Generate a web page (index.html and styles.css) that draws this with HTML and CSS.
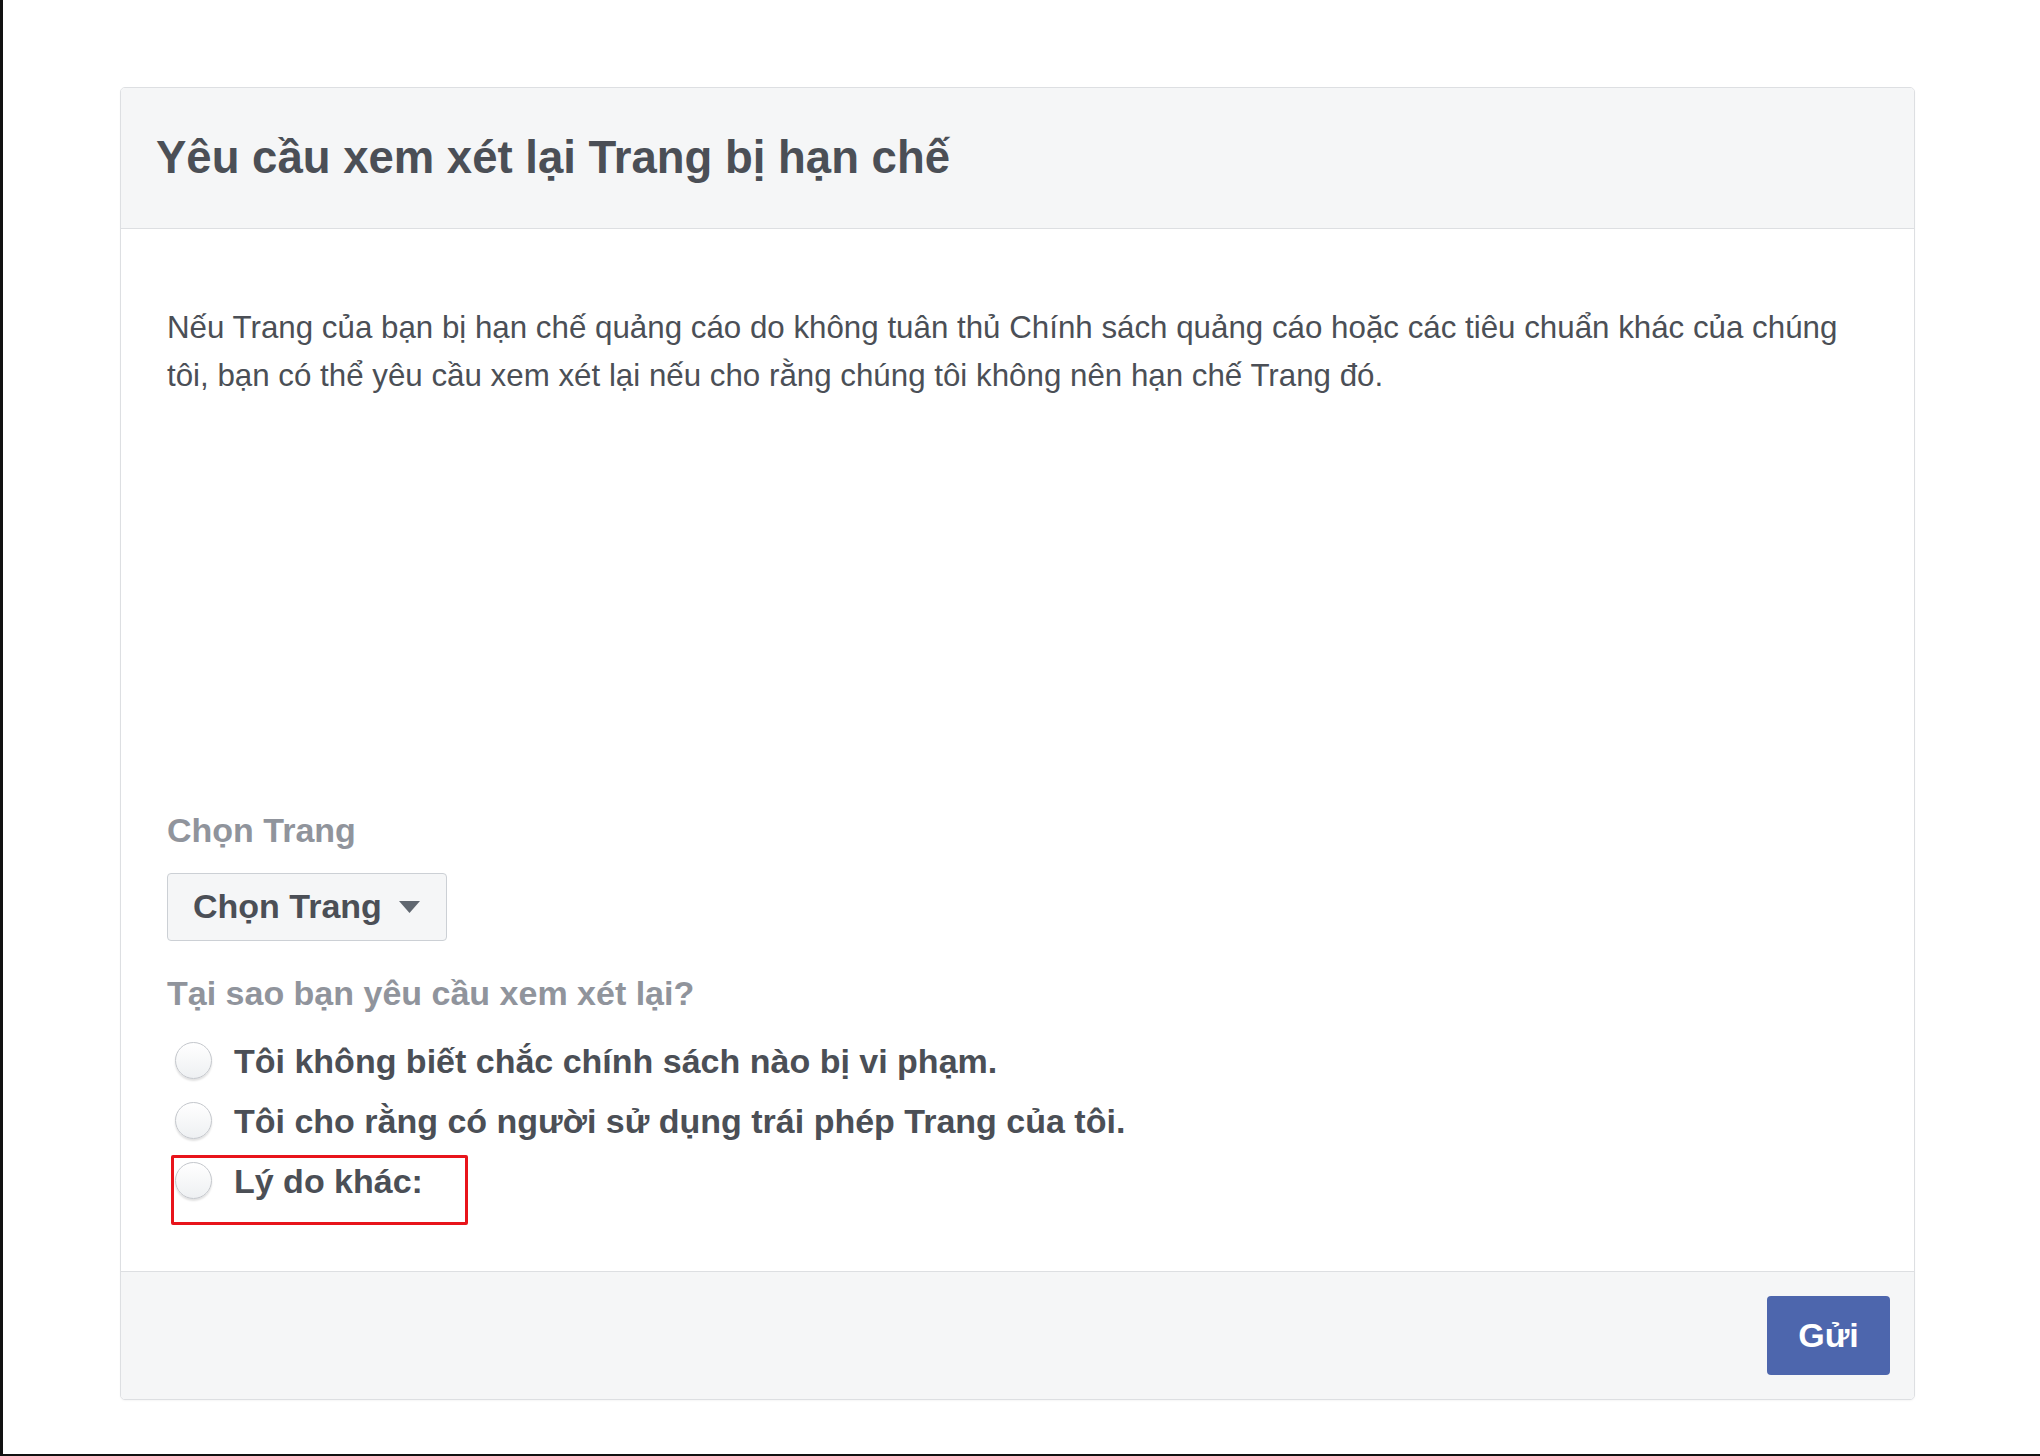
FILE: index.html
```html
<!DOCTYPE html>
<html lang="vi">
<head>
<meta charset="utf-8">
<title>Yêu cầu xem xét lại Trang bị hạn chế</title>
<link rel="stylesheet" href="styles.css">
</head>
<body>
<div class="frame">
  <div class="card">
    <div class="card-header">
      <h1 class="title">Yêu cầu xem xét lại Trang bị hạn chế</h1>
    </div>
    <div class="card-body">
      <p class="intro">Nếu Trang của bạn bị hạn chế quảng cáo do không tuân thủ Chính sách quảng cáo hoặc các tiêu chuẩn khác của chúng tôi, bạn có thể yêu cầu xem xét lại nếu cho rằng chúng tôi không nên hạn chế Trang đó.</p>
      <div class="spacer"></div>
      <div class="field-label">Chọn Trang</div>
      <button class="select" type="button">
        <span class="select-text">Chọn Trang</span>
        <svg class="caret" width="21" height="12" viewBox="0 0 21 12"><path d="M0 0 H21 L10.5 12 Z" fill="#606770"/></svg>
      </button>
      <div class="field-label question">Tại sao bạn yêu cầu xem xét lại?</div>
      <div class="options">
        <label class="option"><span class="radio"></span><span class="option-text">Tôi không biết chắc chính sách nào bị vi phạm.</span></label>
        <label class="option"><span class="radio"></span><span class="option-text">Tôi cho rằng có người sử dụng trái phép Trang của tôi.</span></label>
        <label class="option highlighted"><span class="radio"></span><span class="option-text">Lý do khác:</span><span class="highlight-box"></span></label>
      </div>
    </div>
    <div class="card-footer">
      <button class="submit" type="button">Gửi</button>
    </div>
  </div>
</div>
</body>
</html>
```

FILE: styles.css
```css
html, body {
  margin: 0;
  padding: 0;
  background: #ffffff;
}

.frame {
  box-sizing: border-box;
  width: 2040px;
  height: 1456px;
  border-left: 3px solid #111111;
  border-bottom: 2px solid #111111;
  padding: 87px 0 0 117px;
  font-family: "Liberation Sans", Arial, Helvetica, sans-serif;
  color: #4b4f56;
}

.card {
  width: 1795px;
  box-sizing: border-box;
  border: 1px solid #dddfe2;
  border-radius: 5px;
  background: #ffffff;
  overflow: hidden;
  box-shadow: 0 1px 2px rgba(0, 0, 0, 0.04);
}

.card-header {
  background: #f5f6f7;
  border-bottom: 1px solid #dddfe2;
  padding: 44px 35px;
}

.title {
  margin: 0;
  font-size: 45.5px;
  line-height: 52px;
  font-weight: bold;
  color: #4b4f56;
}

.card-body {
  padding: 75px 46px 61px 46px;
}

.intro {
  margin: 0;
  font-size: 31.3px;
  line-height: 48px;
  color: #4b4f56;
}

.spacer {
  height: 410px;
}

.field-label {
  font-size: 34px;
  line-height: 40px;
  font-weight: bold;
  color: #90949c;
}

.select {
  margin-top: 23px;
  box-sizing: border-box;
  width: 280px;
  height: 68px;
  display: flex;
  align-items: center;
  gap: 17px;
  padding: 0 0 0 25px;
  border: 1px solid #ccd0d5;
  border-radius: 4px;
  background: #f5f6f7;
  font-family: inherit;
  font-size: 34px;
  font-weight: bold;
  color: #4b4f56;
  cursor: pointer;
}

.select-text {
  line-height: 40px;
  margin-top: -3px;
}

.caret {
  display: block;
  margin-top: 0;
}

.question {
  margin-top: 32px;
}

.options {
  margin-top: 17px;
  display: flex;
  flex-direction: column;
}

.option {
  position: relative;
  display: flex;
  align-items: center;
  height: 60px;
  gap: 22px;
  padding-left: 8px;
  font-size: 34px;
  font-weight: bold;
  color: #4b4f56;
}

.radio {
  box-sizing: border-box;
  width: 37px;
  height: 37px;
  flex: none;
  border-radius: 50%;
  border: 1px solid #c4c7cc;
  background: linear-gradient(#ffffff, #eef0f2);
  box-shadow: 0 2px 2px rgba(0, 0, 0, 0.12);
}

.option-text {
  line-height: 40px;
  padding-top: 1px;
}

.highlight-box {
  position: absolute;
  left: 4px;
  top: 5px;
  width: 297px;
  height: 70px;
  box-sizing: border-box;
  border: 3px solid #e8141b;
  border-radius: 2px;
}

.card-footer {
  background: #f5f6f7;
  border-top: 1px solid #dddfe2;
  padding: 24px 24px 24px 24px;
  display: flex;
  justify-content: flex-end;
}

.submit {
  width: 123px;
  height: 79px;
  border: none;
  border-radius: 4px;
  background: #4d66ad;
  color: #ffffff;
  font-family: inherit;
  font-size: 34px;
  font-weight: bold;
  cursor: pointer;
}
```
